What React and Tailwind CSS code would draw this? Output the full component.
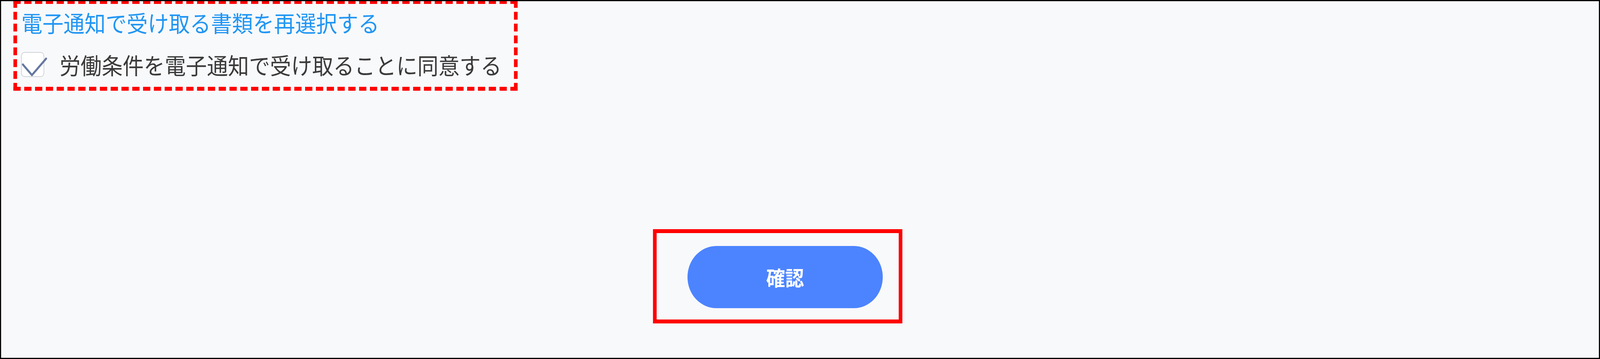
import React, { useLayoutEffect, useState } from "react";

const font = { fontFamily: '"Noto Sans CJK JP", "Noto Sans", sans-serif' };

// the layout is drawn at 4408px and squeezed to the real viewport width
const DESIGN_WIDTH = 4408;

const CheckBox = ({ checked, onChange }) => (
  <button
    type="button"
    onClick={onChange}
    className="relative w-[64px] h-[64px] shrink-0 rounded-[10px] border-2 border-[#cfd2d8] bg-white"
  >
    {checked && (
      <svg
        className="absolute left-[-2px] top-[-2px] overflow-visible"
        width="72"
        height="64"
        viewBox="0 0 72 64"
        fill="none"
      >
        <path
          d="M5 32 L30 59 L69 17"
          stroke="#66779f"
          strokeWidth="5.5"
          strokeLinecap="round"
          strokeLinejoin="round"
        />
      </svg>
    )}
  </button>
);

const App = () => {
  const [agreed, setAgreed] = useState(true);
  const [scale, setScale] = useState(1);

  useLayoutEffect(() => {
    const fit = () => setScale(document.documentElement.clientWidth / DESIGN_WIDTH);
    fit();
    window.addEventListener("resize", fit);
    return () => window.removeEventListener("resize", fit);
  }, []);

  return (
    <div className="w-full h-[918px] overflow-hidden">
      <div
        className="w-[4408px] h-[918px] origin-top-left border-[3px] border-black bg-[#f8f9fb] overflow-hidden"
        style={{ ...font, transform: `scaleX(${scale})` }}
      >
        <div className="-mt-[3px] ml-[34px] w-[1389px] h-[232px] border-[10px] border-dashed border-[#ff0000] pl-[11px] pt-[4px]">
          <a className="block ml-[1px] text-[58px] leading-[86px] text-[#2196f3] whitespace-nowrap cursor-pointer">
            電子通知で受け取る書類を再選択する
          </a>
          <label className="mt-[22px] flex items-center h-[86px] gap-[42px] whitespace-nowrap">
            <CheckBox checked={agreed} onChange={() => setAgreed(!agreed)} />
            <span className="text-[58px] leading-[86px] text-[#3a3a3a]">
              労働条件を電子通知で受け取ることに同意する
            </span>
          </label>
        </div>

        <div className="mt-[354px] ml-[1796px] w-[687px] h-[241px] border-[10px] border-[#ff0000] pl-[85px] pt-[33px]">
          <button
            type="button"
            className="w-[538px] h-[159px] rounded-full bg-[#4c84ff] text-white text-[52px] font-bold"
          >
            確認
          </button>
        </div>
      </div>
    </div>
  );
};

export default App;
